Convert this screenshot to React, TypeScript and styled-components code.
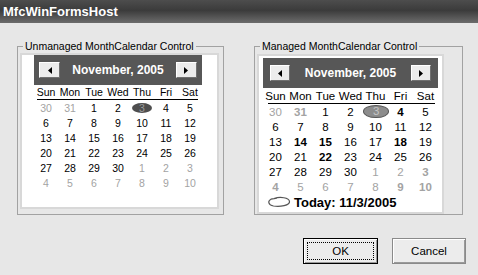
import React from 'react';
import styled, { createGlobalStyle } from 'styled-components';

const GlobalStyle = createGlobalStyle`
  html, body {
    margin: 0;
    padding: 0;
    background: #e7e7e7;
  }
  body {
    font-family: "Liberation Sans", Arial, sans-serif;
  }
`;

const Window = styled.div`
  width: 478px;
  height: 275px;
  display: flex;
  flex-direction: column;
  background: #e7e7e7;
  overflow: hidden;
`;

const TitleBar = styled.div`
  height: 23px;
  flex-shrink: 0;
  display: flex;
  align-items: center;
  padding-left: 3px;
  background: linear-gradient(to bottom, #4d4d4d 0%, #3b3b3b 45%, #6c6c6c 100%);
  color: #fff;
  font-size: 13px;
  font-weight: bold;
`;

const Body = styled.div`
  display: flex;
  flex-direction: column;
  padding: 17px 0 0 17px;
`;

const Groups = styled.div`
  display: flex;
  align-items: flex-start;
  gap: 30px;
`;

const Group = styled.fieldset<{ $width: number; $pad: string }>`
  box-sizing: border-box;
  width: ${p => p.$width}px;
  min-width: 0;
  margin: 0;
  padding: ${p => p.$pad};
  border: 1px solid #a2a2a2;
`;

const Legend = styled.legend`
  margin-left: 3px;
  padding: 0 2px;
  font-size: 10.5px;
  line-height: 13px;
  color: #000;
`;

const Panel = styled.div<{ $width: number; $height: number; $pad: string; $top: number }>`
  box-sizing: border-box;
  width: ${p => p.$width}px;
  height: ${p => p.$height}px;
  margin-top: ${p => p.$top}px;
  padding: ${p => p.$pad};
  background: #fff;
  border: 2px solid #d8d8d8;
`;

const Calendar = styled.div<{ $cell: number; $size: number }>`
  width: ${p => p.$cell * 7}px;
  font-size: ${p => p.$size}px;
  color: #000;
`;

const Header = styled.div<{ $pad: number }>`
  height: 30px;
  display: flex;
  align-items: center;
  justify-content: space-between;
  padding: 0 ${p => p.$pad}px;
  background: #575757;
`;

const Arrow = styled.div<{ $w: number }>`
  box-sizing: border-box;
  width: ${p => p.$w}px;
  height: 16px;
  display: flex;
  align-items: center;
  justify-content: center;
  background: #ececec;
  border: 1px solid;
  border-color: #fff #707070 #707070 #fff;
`;

const MonthTitle = styled.div`
  color: #fff;
  font-size: 12px;
  font-weight: bold;
`;

const Names = styled.div<{ $cell: number; $height: number }>`
  display: grid;
  grid-template-columns: repeat(7, ${p => p.$cell}px);
  height: ${p => p.$height}px;
  align-items: center;
  text-align: center;
`;

const Rule = styled.div<{ $inset: string }>`
  height: 1px;
  margin: ${p => p.$inset};
  background: #000;
`;

const Days = styled.div<{ $cell: number }>`
  display: grid;
  grid-template-columns: repeat(7, ${p => p.$cell}px);
  grid-auto-rows: 15px;
  align-items: center;
  text-align: center;
`;

const Day = styled.div<{ $other: boolean; $bold: boolean }>`
  color: ${p => (p.$other ? '#a3a3a3' : '#000')};
  font-weight: ${p => (p.$bold ? 'bold' : 'normal')};
`;

const TodayMark = styled.span<{ $filled: boolean }>`
  display: inline-block;
  padding: ${p => (p.$filled ? '0 7px' : '0 9px')};
  line-height: ${p => (p.$filled ? '10px' : '11px')};
  border-radius: 50%;
  background: ${p => (p.$filled ? '#4e4e4e' : '#8c8c8c')};
  border: ${p => (p.$filled ? 'none' : '1px solid #555')};
  color: ${p => (p.$filled ? '#9a9a9a' : '#c4c4c4')};
`;

const TodayRow = styled.div`
  height: 16px;
  display: flex;
  align-items: center;
  gap: 3px;
  padding-left: 4px;
  font-size: 13px;
  font-weight: bold;
`;

const Buttons = styled.div`
  display: flex;
  justify-content: flex-end;
  gap: 14px;
  margin-top: 23px;
  padding-right: 12px;
`;

const Button = styled.div<{ $default?: boolean; $width: number }>`
  box-sizing: border-box;
  width: ${p => p.$width}px;
  height: 26px;
  display: flex;
  padding: ${p => (p.$default ? '3px' : '0')};
  background: #ececec;
  border: 1px solid ${p => (p.$default ? '#000' : '#8a8a8a')};
  box-shadow: inset 1px 1px 0 #fff, inset -1px -1px 0 #9a9a9a;
  font-size: 11.5px;
  color: #000;
`;

const ButtonLabel = styled.div<{ $focus?: boolean }>`
  flex: 1;
  display: flex;
  align-items: center;
  justify-content: center;
  border: 1px dotted ${p => (p.$focus ? '#000' : 'transparent')};
`;

type Cell = { d: number; other?: boolean; bold?: boolean; today?: boolean };

const baseDays = (): Cell[] => {
  const cells: Cell[] = [{ d: 30, other: true }, { d: 31, other: true }];
  for (let i = 1; i <= 30; i++) cells.push({ d: i, today: i === 3 });
  for (let i = 1; i <= 10; i++) cells.push({ d: i, other: true });
  return cells;
};

const unmanagedDays = baseDays();

// bolded dates on the managed control, by grid index
const boldIdx = [1, 5, 15, 16, 19, 23, 34, 35, 40, 41];
const managedDays = baseDays().map((c, i) => ({ ...c, bold: boldIdx.includes(i) }));

const names = ['Sun', 'Mon', 'Tue', 'Wed', 'Thu', 'Fri', 'Sat'];

const Tri = ({ dir }: { dir: 'l' | 'r' }) => (
  <svg width="4" height="7" viewBox="0 0 4 7">
    <path d={dir === 'l' ? 'M4 0 L0 3.5 L4 7 Z' : 'M0 0 L4 3.5 L0 7 Z'} fill="#000" />
  </svg>
);

interface MonthProps {
  cell: number;
  size: number;
  days: Cell[];
  filledToday: boolean;
  headPad: number;
  arrowW: number;
  namesH: number;
  ruleInset: string;
  showToday?: boolean;
}

const Month: React.FC<MonthProps> = ({ cell, size, days, filledToday, headPad, arrowW, namesH, ruleInset, showToday }) => (
  <Calendar $cell={cell} $size={size}>
    <Header $pad={headPad}>
      <Arrow $w={arrowW}><Tri dir="l" /></Arrow>
      <MonthTitle>November, 2005</MonthTitle>
      <Arrow $w={arrowW}><Tri dir="r" /></Arrow>
    </Header>
    <Names $cell={cell} $height={namesH}>
      {names.map(n => <div key={n}>{n}</div>)}
    </Names>
    <Rule $inset={ruleInset} />
    <Days $cell={cell}>
      {days.map((c, i) => (
        <Day key={i} $other={!!c.other} $bold={!!c.bold}>
          {c.today ? <TodayMark $filled={filledToday}>{c.d}</TodayMark> : c.d}
        </Day>
      ))}
    </Days>
    {showToday && (
      <TodayRow>
        <svg width="24" height="12" viewBox="0 0 24 12">
          <path d="M7 2.5 C13 0.5 22 1.5 22.5 5.5 C23 9.5 13 11 6.5 10 C1 9 0.5 5 4 3.2 L10 2.2" fill="none" stroke="#555" strokeWidth="1.2" />
        </svg>
        <span>Today: 11/3/2005</span>
      </TodayRow>
    )}
  </Calendar>
);

export default function App() {
  return (
    <Window>
      <GlobalStyle />
      <TitleBar>MfcWinFormsHost</TitleBar>
      <Body>
        <Groups>
          <Group $width={207} $pad="0 4px 5px 2px">
            <Legend>Unmanaged MonthCalendar Control</Legend>
            <Panel $width={199} $height={156} $pad="0 0 0 12px" $top={0}>
              <Month
                cell={24}
                size={10.5}
                days={unmanagedDays}
                filledToday
                headPad={5}
                arrowW={21}
                namesH={14}
                ruleInset="0 4px 0 3px"
              />
            </Panel>
          </Group>
          <Group $width={209} $pad="0 0 0 2px">
            <Legend>Managed MonthCalendar Control</Legend>
            <Panel $width={187} $height={160} $pad="2px 0 0 4px" $top={1}>
              <Month
                cell={25}
                size={11.5}
                days={managedDays}
                filledToday={false}
                headPad={7}
                arrowW={20}
                namesH={15}
                ruleInset="0 3px 0 5px"
                showToday
              />
            </Panel>
          </Group>
        </Groups>
        <Buttons>
          <Button $default $width={75}>
            <ButtonLabel $focus>OK</ButtonLabel>
          </Button>
          <Button $width={74}>
            <ButtonLabel>Cancel</ButtonLabel>
          </Button>
        </Buttons>
      </Body>
    </Window>
  );
}
